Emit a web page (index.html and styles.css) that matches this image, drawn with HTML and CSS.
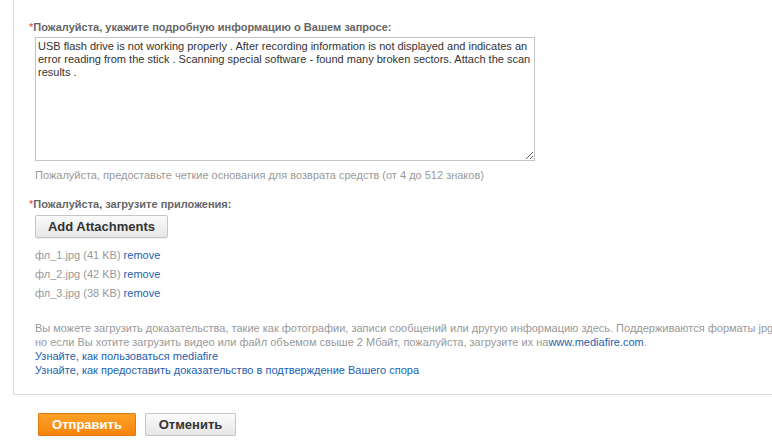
FILE: index.html
```html
<!DOCTYPE html>
<html lang="ru">
<head>
<meta charset="utf-8">
<link rel="stylesheet" href="styles.css">
</head>
<body>
<div class="panel">
  <div class="label"><span class="req">*</span>Пожалуйста, укажите подробную информацию о Вашем запросе:</div>
  <div class="field">
    <textarea class="details">USB flash drive is not working properly . After recording information is not displayed and indicates an error reading from the stick . Scanning special software - found many broken sectors. Attach the scan results .</textarea>
    <div class="hint">Пожалуйста, предоставьте четкие основания для возврата средств (от 4 до 512 знаков)</div>
  </div>
  <div class="label label-attach"><span class="req">*</span>Пожалуйста, загрузите приложения:</div>
  <div class="field">
    <button class="btn-attach" type="button">Add Attachments</button>
    <ul class="files">
      <li>фл_1.jpg (41 KB) <a href="#" class="link">remove</a></li>
      <li>фл_2.jpg (42 KB) <a href="#" class="link">remove</a></li>
      <li>фл_3.jpg (38 KB) <a href="#" class="link">remove</a></li>
    </ul>
    <div class="info">
      <div class="nowrap">Вы можете загрузить доказательства, такие как фотографии, записи сообщений или другую информацию здесь. Поддерживаются форматы jpg,jpeg</div>
      <div>но если Вы хотите загрузить видео или файл объемом свыше 2 Мбайт, пожалуйста, загрузите их на<a href="#" class="link">www.mediafire.com</a>.</div>
      <div><a href="#" class="link">Узнайте, как пользоваться mediafire</a></div>
      <div><a href="#" class="link">Узнайте, как предоставить доказательство в подтверждение Вашего спора</a></div>
    </div>
  </div>
</div>
<div class="actions">
  <button class="btn btn-submit" type="button">Отправить</button>
  <button class="btn btn-cancel" type="button">Отменить</button>
</div>
</body>
</html>
```
FILE: styles.css
```css
html, body {
  margin: 0;
  padding: 0;
  background: #fff;
  overflow: hidden;
}
body {
  font-family: "Liberation Sans", Arial, sans-serif;
  font-size: 11px;
  color: #666;
  width: 772px;
}
.panel {
  margin-left: 13px;
  width: 900px;
  border-left: 1px solid #dcdcdc;
  border-bottom: 1px solid #dcdcdc;
  padding: 20px 0 17px 15px;
}
.label {
  font-weight: bold;
  font-size: 11px;
  line-height: 14px;
  color: #666;
}
.req {
  color: #e4393c;
  font-weight: normal;
}
.field {
  padding-left: 6px;
}
.details {
  display: block;
  margin-top: 3px;
  width: 500px;
  height: 124px;
  box-sizing: border-box;
  border: 1px solid #c4c4c4;
  padding: 2px 2px;
  font-family: "Liberation Sans", Arial, sans-serif;
  font-size: 11px;
  line-height: 13px;
  color: #333;
  resize: both;
  outline: none;
}
.hint {
  margin-top: 7px;
  line-height: 14px;
  color: #999;
  font-size: 11px;
}
.label-attach {
  margin-top: 15px;
}
.btn-attach {
  display: block;
  margin-top: 4px;
  width: 133px;
  height: 23px;
  padding: 0;
  border: 1px solid #c6c6c6;
  border-radius: 2px;
  background: linear-gradient(#fbfbfb, #e6e6e6);
  font-family: "Liberation Sans", Arial, sans-serif;
  font-weight: bold;
  font-size: 13px;
  color: #333;
  box-shadow: 0 1px 1px rgba(0,0,0,0.08);
}
.files {
  list-style: none;
  margin: 8px 0 0;
  padding: 0;
}
.files li {
  line-height: 19px;
  color: #999;
  font-size: 11px;
}
.link {
  color: #1c5fb0;
  text-decoration: none;
}
.info {
  margin-top: 18px;
  line-height: 14px;
  color: #999;
  font-size: 11px;
}
.nowrap {
  white-space: nowrap;
}
.actions {
  display: flex;
  gap: 9px;
  padding: 18px 0 0 38px;
}
.btn {
  height: 23px;
  padding: 0;
  font-family: "Liberation Sans", Arial, sans-serif;
  font-weight: bold;
  font-size: 13px;
  border-radius: 1px;
}
.btn-submit {
  width: 98px;
  color: #fff;
  border: 1px solid #e07a10;
  background: linear-gradient(#ffa128, #f7850c);
}
.btn-cancel {
  width: 91px;
  color: #333;
  border: 1px solid #c6c6c6;
  background: linear-gradient(#fbfbfb, #e6e6e6);
}
```
